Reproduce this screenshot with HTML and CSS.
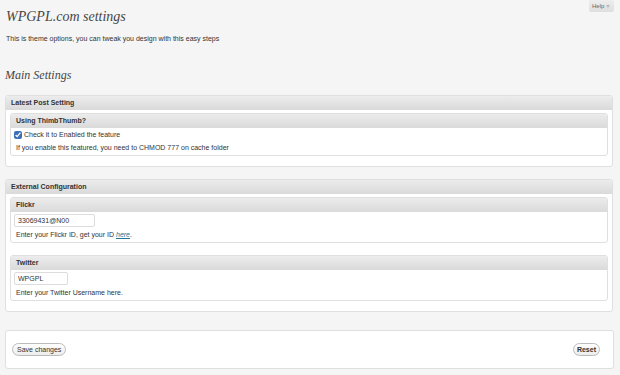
FILE: index.html
```html
<!DOCTYPE html>
<html>
<head>
<meta charset="utf-8">
<link rel="stylesheet" href="styles.css">
</head>
<body>
<div class="wrap">
  <div class="top">
    <div class="intro">
      <h2 class="title">WPGPL.com settings</h2>
      <p class="desc">This is theme options, you can tweak you design with this easy steps</p>
    </div>
    <div class="help">Help <span class="arrow"></span></div>
  </div>
  <h3 class="section-title">Main Settings</h3>

  <div class="panel">
    <div class="panel-head">Latest Post Setting</div>
    <div class="panel-body">
      <div class="box">
        <div class="box-head">Using ThimbThumb?</div>
        <div class="box-body">
          <label class="check"><input type="checkbox" checked> Check it to Enabled the feature</label>
          <p class="note">If you enable this featured, you need to CHMOD 777 on cache folder</p>
        </div>
      </div>
    </div>
  </div>

  <div class="panel">
    <div class="panel-head">External Configuration</div>
    <div class="panel-body">
      <div class="box">
        <div class="box-head">Flickr</div>
        <div class="box-body">
          <input class="field field-flickr" type="text" value="33069431@N00">
          <p class="note">Enter your Flickr ID, get your ID <a href="#">here</a>.</p>
        </div>
      </div>
      <div class="box">
        <div class="box-head">Twitter</div>
        <div class="box-body">
          <input class="field field-twitter" type="text" value="WPGPL">
          <p class="note">Enter your Twitter Username here.</p>
        </div>
      </div>
    </div>
  </div>

  <div class="actions">
    <button class="btn">Save changes</button>
    <button class="btn btn-reset">Reset</button>
  </div>
</div>
</body>
</html>
```

FILE: styles.css
```css
* { box-sizing: border-box; }
html, body { margin: 0; padding: 0; }
body {
  background: #f5f5f5;
  font-family: "Liberation Sans", Arial, sans-serif;
  font-size: 7px;
  color: #333;
}
.wrap { padding: 0 6px 0 5px; }
.top {
  display: flex;
  justify-content: space-between;
  align-items: flex-start;
}
.intro { padding-left: 1px; }
.title {
  margin: 7px 0 0;
  font-family: "Liberation Serif", Georgia, serif;
  font-style: italic;
  font-weight: normal;
  font-size: 14px;
  line-height: 20px;
  color: #464646;
}
.desc {
  margin: 7px 0 0;
  font-size: 7px;
  line-height: 9px;
  color: #333;
}
.help {
  width: 25px;
  height: 12px;
  background: linear-gradient(#eeeeee, #dedede);
  border-radius: 0 0 2px 2px;
  font-size: 6px;
  line-height: 12px;
  color: #666;
  padding-left: 3px;
  display: flex;
  align-items: center;
  gap: 2px;
}
.arrow {
  width: 0; height: 0;
  border-left: 2px solid transparent;
  border-right: 2px solid transparent;
  border-top: 3px solid #bbb;
}
.section-title {
  margin: 24px 0 0;
  font-family: "Liberation Serif", Georgia, serif;
  font-style: italic;
  font-weight: normal;
  font-size: 12px;
  line-height: 16px;
  color: #464646;
}
.panel {
  margin-top: 12px;
  width: 608px;
  background: #fff;
  border: 1px solid #dfdfdf;
  border-radius: 3px;
}
.panel-head {
  height: 14px;
  line-height: 14px;
  padding-left: 5px;
  background: linear-gradient(#ececec, #dadada);
  font-weight: bold;
  color: #333;
  border-radius: 2px 2px 0 0;
}
.panel-body {
  padding: 3px 4px 10px 4px;
  display: flex;
  flex-direction: column;
  gap: 12px;
}
.box {
  border: 1px solid #dfdfdf;
  border-radius: 3px;
  background: #fff;
}
.box-head {
  height: 14px;
  line-height: 14px;
  padding-left: 5px;
  background: linear-gradient(#ececec, #dadada);
  font-weight: bold;
  color: #333;
  border-radius: 2px 2px 0 0;
}
.box-body { padding: 2px 3px 2px 3px; }
.check {
  display: flex;
  align-items: center;
  gap: 2px;
  height: 10px;
  line-height: 10px;
}
.check input {
  margin: 0;
  width: 8px;
  height: 8px;
  accent-color: #3c6fb8;
}
.note {
  margin: 3px 0 0 2px;
  line-height: 10px;
}
.field {
  display: block;
  height: 13px;
  padding: 0 3px;
  border: 1px solid #dcdcdc;
  border-radius: 2px;
  font-family: "Liberation Sans", Arial, sans-serif;
  font-size: 7px;
  color: #333;
  background: #fff;
  margin: 0;
}
.field-flickr { width: 81px; }
.field-twitter { width: 54px; }
.note a { color: #21759b; font-style: italic; }
.actions {
  margin-top: 18px;
  width: 609px;
  height: 39px;
  background: #fff;
  border: 1px solid #dfdfdf;
  border-radius: 3px;
  display: flex;
  justify-content: space-between;
  align-items: center;
  padding: 0 13px 0 6px;
}
.btn {
  height: 13px;
  padding: 0 4px;
  border: 1px solid #bbb;
  border-radius: 7px;
  background: linear-gradient(#ffffff, #ececec);
  font-family: "Liberation Sans", Arial, sans-serif;
  font-size: 7px;
  color: #333;
  line-height: 11px;
}
.btn-reset { font-weight: bold; padding: 0 3px; }
```
